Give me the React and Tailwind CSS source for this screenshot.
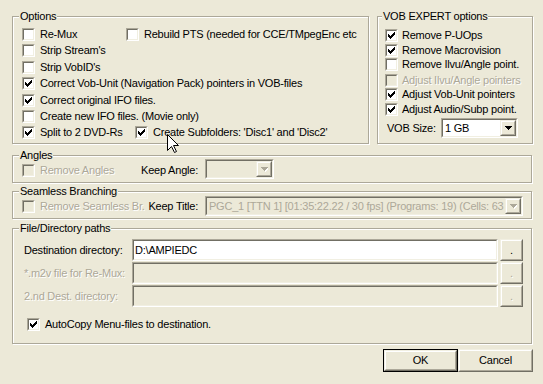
import React from "react";

const TICK =
  "M6 0h1v1h-1z M5 1h2v1h-2z M0 2h1v1h-1z M4 2h3v1h-3z M0 3h2v1h-2z M3 3h3v1h-3z M0 4h5v1h-5z M1 5h3v1h-3z M2 6h1v1h-1z";

const dim = "text-[#ACA899] [text-shadow:1px_1px_0_#fff]";

function Box({ checked, disabled }) {
  return (
    <span className="relative block w-[13px] h-[13px] shrink-0 border border-t-[#ACA899] border-l-[#ACA899] border-b-white border-r-white">
      <span
        className={`block w-full h-full border border-t-[#716F64] border-l-[#716F64] border-b-[#F1EFE2] border-r-[#F1EFE2] ${
          disabled ? "bg-[#ECE9D8]" : "bg-white"
        }`}
      />
      {checked && (
        <svg className="absolute left-[2px] top-[2px]" width="7" height="7" shapeRendering="crispEdges">
          <path d={TICK} fill="#000" />
        </svg>
      )}
    </span>
  );
}

function Opt({ label, checked, disabled, tight, className = "" }) {
  return (
    <div className={`flex items-center h-[13px] whitespace-nowrap ${className}`}>
      <Box checked={checked} disabled={disabled} />
      <span className={`${tight ? "ml-[4px]" : "ml-[5px]"} ${disabled ? dim : ""}`}>{label}</span>
    </div>
  );
}

function Sunken({ className = "", disabled, children }) {
  return (
    <div className={`border border-t-[#ACA899] border-l-[#ACA899] border-b-white border-r-white ${className}`}>
      <div
        className={`w-full h-full flex items-center border border-t-[#716F64] border-l-[#716F64] border-b-[#F1EFE2] border-r-[#F1EFE2] ${
          disabled ? "bg-[#ECE9D8]" : "bg-white"
        }`}
      >
        {children}
      </div>
    </div>
  );
}

function Raised({ className = "", children }) {
  return (
    <div className={`border border-t-[#F1EFE2] border-l-[#F1EFE2] border-b-[#716F64] border-r-[#716F64] bg-[#ECE9D8] ${className}`}>
      <div className="w-full h-full flex items-center justify-center border border-t-white border-l-white border-b-[#ACA899] border-r-[#ACA899]">
        {children}
      </div>
    </div>
  );
}

function Arrow({ disabled }) {
  return (
    <Raised className="w-[16px] h-full shrink-0">
      <svg width="8" height="5" shapeRendering="crispEdges">
        {disabled && <path d="M2 1h7l-3.5 4z" fill="#fff" />}
        <path d="M0.5 0.5h7M1.5 1.5h5M2.5 2.5h3M3.5 3.5h1" stroke={disabled ? "#ACA899" : "#000"} />
      </svg>
    </Raised>
  );
}

function Combo({ className = "", disabled, text }) {
  return (
    <Sunken className={className} disabled={disabled}>
      <span className={`flex-1 min-w-0 overflow-hidden whitespace-nowrap pl-[2px] ${disabled ? "text-[#ACA899]" : ""}`}>
        {text}
      </span>
      <Arrow disabled={disabled} />
    </Sunken>
  );
}

function Group({ title, className = "", legendPad = "ml-[6px]", children }) {
  return (
    <fieldset
      className={`border border-[#ACA899] shadow-[inset_1px_1px_0_#fff,1px_1px_0_#fff] m-0 p-0 min-w-0 ${className}`}
    >
      <legend className={`${legendPad} px-[1px] leading-[13px] bg-[#ECE9D8]`}>{title}</legend>
      {children}
    </fieldset>
  );
}

function PathRow({ label, value, disabled }) {
  return (
    <div className="flex items-center h-[22px]">
      <span className={`w-[108px] whitespace-nowrap ${disabled ? dim : ""}`}>{label}</span>
      <Sunken className="w-[366px] h-[22px]" disabled={disabled}>
        <span className="pl-[1px]">{value}</span>
      </Sunken>
      <Raised className="w-[23px] h-[22px] ml-[2px]">
        <span className={`leading-[8px] ${disabled ? dim : ""}`}>.</span>
      </Raised>
    </div>
  );
}

export default function App() {
  return (
    <div className="relative w-[543px] h-[384px] overflow-hidden bg-[#ECE9D8] pl-[12px] pt-[10px] font-['Liberation_Sans',Arial,sans-serif] text-[11px] leading-[13px] tracking-[-0.22px] text-black">
      <div className="flex gap-[8px]">
        <Group title="Options" className="w-[357px] h-[134px]">
          <div className="pl-[9px] pt-[5px] flex flex-col">
            <div className="flex">
              <Opt label="Re-Mux" className="w-[104px]" />
              <Opt label="Rebuild PTS (needed for CCE/TMpegEnc etc" />
            </div>
            <Opt label="Strip Stream's" className="mt-[3px]" />
            <Opt label="Strip VobID's" className="mt-[4px]" />
            <Opt label="Correct Vob-Unit (Navigation Pack) pointers in VOB-files" checked className="mt-[3px]" />
            <Opt label="Correct original IFO files." checked className="mt-[4px]" />
            <Opt label="Create new IFO files. (Movie only)" className="mt-[3px]" />
            <div className="flex mt-[3px]">
              <Opt label="Split to 2 DVD-Rs" checked className="w-[113px]" />
              <Opt label="Create Subfolders: 'Disc1' and 'Disc2'" checked />
            </div>
          </div>
        </Group>

        <Group title="VOB EXPERT options" className="w-[156px] h-[134px]" legendPad="ml-[4px]">
          <div className="pl-[7px] pt-[6px] flex flex-col">
            <Opt label="Remove P-UOps" checked tight />
            <Opt label="Remove Macrovision" checked tight className="mt-[2px]" />
            <Opt label="Remove Ilvu/Angle point." tight className="mt-[1px]" />
            <Opt label="Adjust Ilvu/Angle pointers" disabled tight className="mt-[3px]" />
            <Opt label="Adjust Vob-Unit pointers" checked tight className="mt-[1px]" />
            <Opt label="Adjust Audio/Subp point." checked tight className="mt-[2px]" />
            <div className="flex items-center h-[20px] mt-[2px]">
              <span className="ml-[2px] w-[54px]">VOB Size:</span>
              <Combo className="w-[77px] h-[20px]" text="1 GB" />
            </div>
          </div>
        </Group>
      </div>

      <Group title="Angles" className="w-[520px] h-[34px] mt-[5px]">
        <div className="flex items-center h-[20px] mt-[-3px] pl-[9px]">
          <div className="flex items-center w-[183px] pt-[3px]">
            <Opt label="Remove Angles" disabled />
            <span className="ml-auto mr-[7px]">Keep Angle:</span>
          </div>
          <Combo className="w-[69px] h-[20px]" disabled text="" />
        </div>
      </Group>

      <Group title="Seamless Branching" className="w-[520px] h-[34px] mt-[2px]">
        <div className="flex items-center h-[20px] mt-[-2px] pl-[9px]">
          <div className="flex items-center w-[183px] pt-[1px]">
            <Opt label="Remove Seamless Br." disabled />
            <span className="ml-auto mr-[7px] whitespace-nowrap">Keep Title:</span>
          </div>
          <Combo
            className="w-[318px] h-[20px]"
            disabled
            text="PGC_1 [TTN 1] [01:35:22.22 / 30 fps] (Programs: 19) (Cells: 63"
          />
        </div>
      </Group>

      <Group title="File/Directory paths" className="w-[520px] h-[122px] mt-[3px]">
        <div className="pl-[11px] pt-[4px] flex flex-col gap-[1px]">
          <PathRow label="Destination directory:" value="D:\AMPIEDC" />
          <PathRow label="*.m2v file for Re-Mux:" disabled />
          <PathRow label="2.nd Dest. directory:" disabled />
          <Opt label="AutoCopy Menu-files to destination." checked className="ml-[3px] mt-[10px]" />
        </div>
      </Group>

      <div className="flex ml-[371px] mt-[5px]">
        <div className="w-[75px] h-[23px] border border-black">
          <Raised className="w-full h-full">OK</Raised>
        </div>
        <Raised className="w-[75px] h-[23px]">Cancel</Raised>
      </div>

      <svg className="absolute left-[167px] top-[134px]" width="13" height="20" viewBox="0 0 13 20">
        <path d="M0.5 0.5V16.5L4.5 12.5L7.5 18.5L9.5 17.5L6.5 11.5H11.5Z" fill="#fff" stroke="#000" />
      </svg>
    </div>
  );
}
